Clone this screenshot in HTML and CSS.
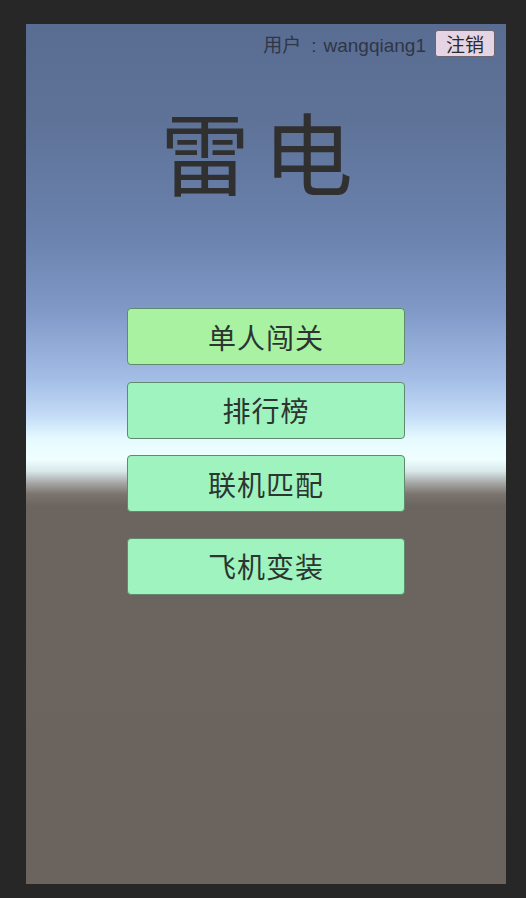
FILE: index.html
```html
<!DOCTYPE html>
<html lang="zh">
<head>
<meta charset="utf-8">
<title>雷电</title>
<link rel="stylesheet" href="styles.css">
</head>
<body>
<div class="screen">
  <div class="topbar">
    <span class="user">用户<span class="colon">:</span>wangqiang1</span>
    <button class="logout">注销</button>
  </div>
  <h1 class="title">雷电</h1>
  <div class="menu">
    <button class="btn btn-first">单人闯关</button>
    <button class="btn">排行榜</button>
    <button class="btn">联机匹配</button>
    <button class="btn btn-last">飞机变装</button>
  </div>
</div>
</body>
</html>
```
FILE: styles.css
```css
html, body {
  margin: 0;
  padding: 0;
  background: #272727;
}
body {
  width: 526px;
  height: 898px;
  padding: 24px 0 0 26px;
  box-sizing: border-box;
  font-family: "Liberation Sans", "Noto Sans CJK SC", sans-serif;
}
.screen {
  width: 480px;
  height: 860px;
  display: flex;
  flex-direction: column;
  align-items: center;
  background: linear-gradient(to bottom,
    #596c92 0px,
    #5f7399 100px,
    #6a82ad 210px,
    #7f98c6 285px,
    #a3bde6 355px,
    #c4dcf6 392px,
    #e6fbff 415px,
    #f0ffff 435px,
    #d9e8ea 447px,
    #a6a7a5 459px,
    #7c746f 470px,
    #6c645f 482px,
    #6b635e 860px);
}
.topbar {
  align-self: stretch;
  display: flex;
  justify-content: flex-end;
  align-items: center;
  gap: 9px;
  padding: 6px 11px 0 0;
}
.user {
  font-size: 19px;
  color: #2f3646;
}
.colon {
  padding: 0 7px 0 10px;
}
.logout {
  width: 60px;
  height: 27px;
  padding: 0;
  background: #e4d4e4;
  border: 1px solid #6a6570;
  border-radius: 3px;
  font-family: "Noto Sans CJK SC", sans-serif;
  font-size: 19px;
  color: #2a2a2a;
  line-height: 1;
}
.title {
  margin: 48px 6px 0 0;
  font-family: "Noto Sans CJK SC", sans-serif;
  font-weight: 400;
  font-size: 90px;
  line-height: 1;
  letter-spacing: 13px;
  color: #303030;
}
.menu {
  margin-top: 113px;
  display: flex;
  flex-direction: column;
  gap: 16.5px;
  align-items: center;
}
.btn {
  width: 278px;
  height: 57px;
  padding: 0;
  background: #9ef3bf;
  border: 1px solid #5f8a6e;
  border-radius: 4px;
  font-family: "Noto Sans CJK SC", sans-serif;
  font-size: 28px;
  line-height: 1;
  color: #2c352f;
  letter-spacing: 1px;
}
.btn-first {
  background: #a8f2a2;
}
.btn-last {
  margin-top: 9px;
}
```
